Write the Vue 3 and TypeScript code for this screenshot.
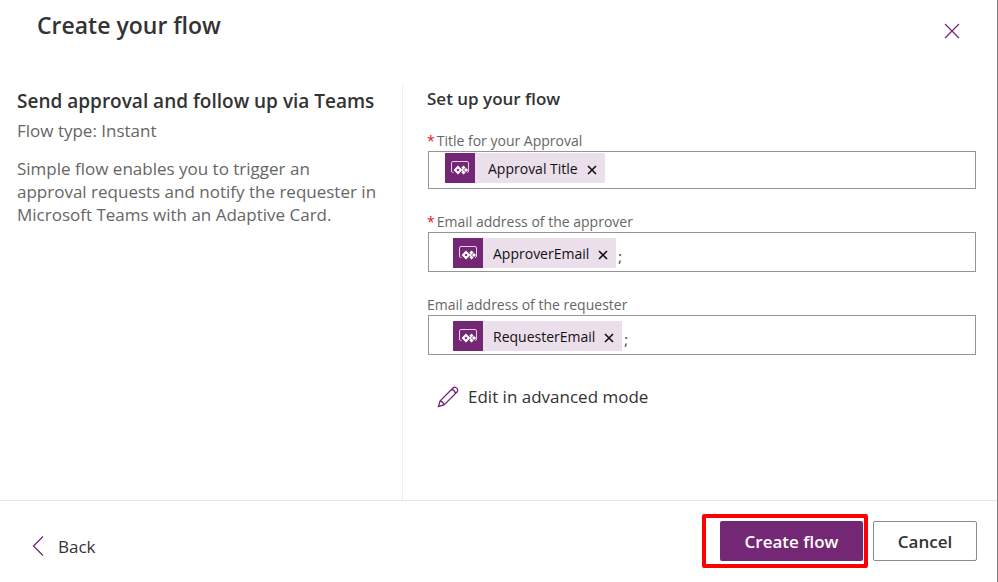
<script setup lang="ts">
import { ref } from 'vue'

interface Field {
  id: string
  label: string
  required: boolean
  token: string
  rest: string
  people: boolean
}

const fields = ref<Field[]>([
  { id: 'title', label: 'Title for your Approval', required: true, token: 'Approval Title', rest: '', people: false },
  { id: 'approver', label: 'Email address of the approver', required: true, token: 'ApproverEmail', rest: ';', people: true },
  { id: 'requester', label: 'Email address of the requester', required: false, token: 'RequesterEmail', rest: ';', people: true },
])

function removeToken(field: Field) {
  field.token = ''
}
</script>

<template>
  <div class="panel">
    <header class="header">
      <h1>Create your flow</h1>
      <button class="close" type="button" aria-label="Close">
        <svg width="16" height="16" viewBox="0 0 16 16"><path d="M1 1l14 14M15 1L1 15" /></svg>
      </button>
    </header>

    <main class="body">
      <section class="summary">
        <h2>Send approval and follow up via Teams</h2>
        <p class="type">Flow type: Instant</p>
        <p class="description">
          Simple flow enables you to trigger an approval requests and notify the requester in Microsoft Teams with an Adaptive Card.
        </p>
      </section>

      <form class="setup" @submit.prevent>
        <h3>Set up your flow</h3>
        <div v-for="field in fields" :key="field.id" class="field">
          <label :for="field.id"><span v-if="field.required" class="star">*</span>{{ field.label }}</label>
          <div class="box" :class="{ people: field.people }">
            <span v-if="field.token" class="token">
              <span class="token-icon">
                <svg width="20" height="16" viewBox="0 0 20 16">
                  <path class="frame" d="M3.500 12.500H2.500Q1.500 12.500 1.500 11V3Q1.500 1.500 3 1.500H17Q18.500 1.500 18.500 3V11Q18.500 12.500 17 12.500" />
                  <path class="diamond" d="M8 7L11 10L8 13L5 10Z" />
                  <path class="cluster" d="M13.500 5.400l2.100 2.100-2.100 2.100-2.100-2.100zM13.500 10.400l2.100 2.100-2.100 2.100-2.100-2.100zM16 7.900l2.100 2.100-2.100 2.100-2.100-2.100zM12 8.200l1.800 1.800-1.800 1.800z" />
                </svg>
              </span>
              <span class="token-text">{{ field.token }}</span>
              <button type="button" :aria-label="`Remove ${field.token}`" @click="removeToken(field)">
                <svg width="10" height="10" viewBox="0 0 10 10"><path d="M1 1l8 8M9 1L1 9" /></svg>
              </button>
            </span>
            <input :id="field.id" v-model="field.rest" type="text" :required="field.required" />
          </div>
        </div>
        <button class="advanced" type="button">
          <svg width="22" height="22" viewBox="0 0 22 22">
            <path d="M1.500 20.500L3 15L16 2Q17 1 18.300 1.300Q20.500 2 20.700 4Q20.800 5.200 20 6L7 19ZM3 15Q6.300 15.500 7 19M14.500 3.500Q17.800 4 18.500 7.500" />
          </svg>
          Edit in advanced mode
        </button>
      </form>
    </main>

    <footer class="footer">
      <button class="back" type="button">
        <svg width="12" height="20" viewBox="0 0 12 20"><path d="M11 0.500L1.500 10L11 19.500" /></svg>
        Back
      </button>
      <div class="actions">
        <div class="highlight">
          <button class="action primary" type="button">Create flow</button>
        </div>
        <button class="action secondary" type="button">Cancel</button>
      </div>
    </footer>
  </div>
</template>

<style>
body {
  background: #fff;
}
</style>

<style scoped>
* {
  box-sizing: border-box;
}

.panel {
  display: flex;
  flex-direction: column;
  min-height: 100vh;
  border-right: 1px solid #7a7a7a;
  color: #333;
  font-family: 'Open Sans', 'Noto Sans', sans-serif;
  font-size: 17px;
}

h1,
h2,
h3,
p {
  margin: 0;
}

button {
  padding: 0;
  border: 0;
  background: none;
  color: inherit;
  font: inherit;
  cursor: pointer;
}

svg {
  display: block;
  flex: none;
  fill: none;
}

.header {
  display: flex;
  justify-content: space-between;
  align-items: flex-start;
  padding: 9px 37px 0;
  height: 85px;
}

h1 {
  font-size: 23px;
  line-height: 32px;
  font-weight: 600;
}

.close {
  padding: 14px 0;
}

.close svg,
.back svg,
.advanced svg {
  stroke: #742774;
  stroke-width: 1.3;
}

.body {
  display: grid;
  grid-template-columns: minmax(280px, 402px) 1fr;
  flex: 1;
}

.summary {
  padding: 4px 22px 0 17px;
  color: #666;
  line-height: 23px;
}

h2 {
  color: #333;
  font-size: 19px;
  line-height: 24px;
  font-weight: 600;
  white-space: nowrap;
}

.type {
  margin: 6px 0 15px;
}

.setup {
  padding: 4px 21px 0 25px;
  border-left: 1px solid #ededed;
}

h3 {
  margin: 0 0 22px -1px;
  font-size: 17px;
  line-height: 20px;
  font-weight: 600;
}

.field {
  margin-bottom: 23px;
}

label {
  display: block;
  margin-left: -1px;
  color: #666;
  font-size: 14px;
  line-height: 20px;
}

.star {
  margin-right: 2px;
  color: #e81123;
}

.box {
  display: flex;
  align-items: flex-start;
  padding: 1px 16px;
  height: 38px;
  border: 1px solid #949494;
}

.box.people {
  padding: 5px 24px;
  height: 40px;
}

.token {
  display: flex;
  align-items: center;
  height: 30px;
  background: #ebdfeb;
  color: #111;
  font-size: 14px;
}

.token-icon {
  display: grid;
  place-items: center;
  width: 30px;
  height: 30px;
  background: #742774;
}

.frame {
  stroke: #e3d0e3;
}

.diamond {
  stroke: #fff;
  stroke-width: 2;
  fill: #742774;
}

.cluster {
  fill: #fff;
}

.token-text {
  padding: 0 9px 0 13px;
}

.people .token-text {
  padding-left: 10px;
}

.token button {
  padding: 4px 8px 0 0;
}

.token button svg {
  stroke: #111;
  stroke-width: 1.6;
}

input {
  flex: 1;
  min-width: 0;
  height: 30px;
  padding: 6px 0 0 2px;
  border: 0;
  outline: 0;
  background: none;
  color: #333;
  font: inherit;
  font-size: 14px;
}

.advanced {
  display: flex;
  align-items: center;
  gap: 9px;
  margin: 0 0 20px 9px;
  line-height: 38px;
}

.footer {
  display: flex;
  justify-content: space-between;
  padding: 13px 20px 14px 32px;
  border-top: 1px solid #e5e5e5;
}

.back {
  display: flex;
  align-items: center;
  gap: 14px;
  padding-top: 10px;
}

.actions {
  display: flex;
  align-items: center;
  gap: 5px;
}

.highlight {
  padding: 3px 1px 3px 14px;
  border: 4px solid #f00;
  border-radius: 2px;
}

.action {
  height: 40px;
  border-radius: 2px;
  font-weight: 600;
}

.primary {
  width: 143px;
  background: #742774;
  color: #fff;
}

.secondary {
  width: 104px;
  border: 1px solid #8a8a8a;
}
</style>
